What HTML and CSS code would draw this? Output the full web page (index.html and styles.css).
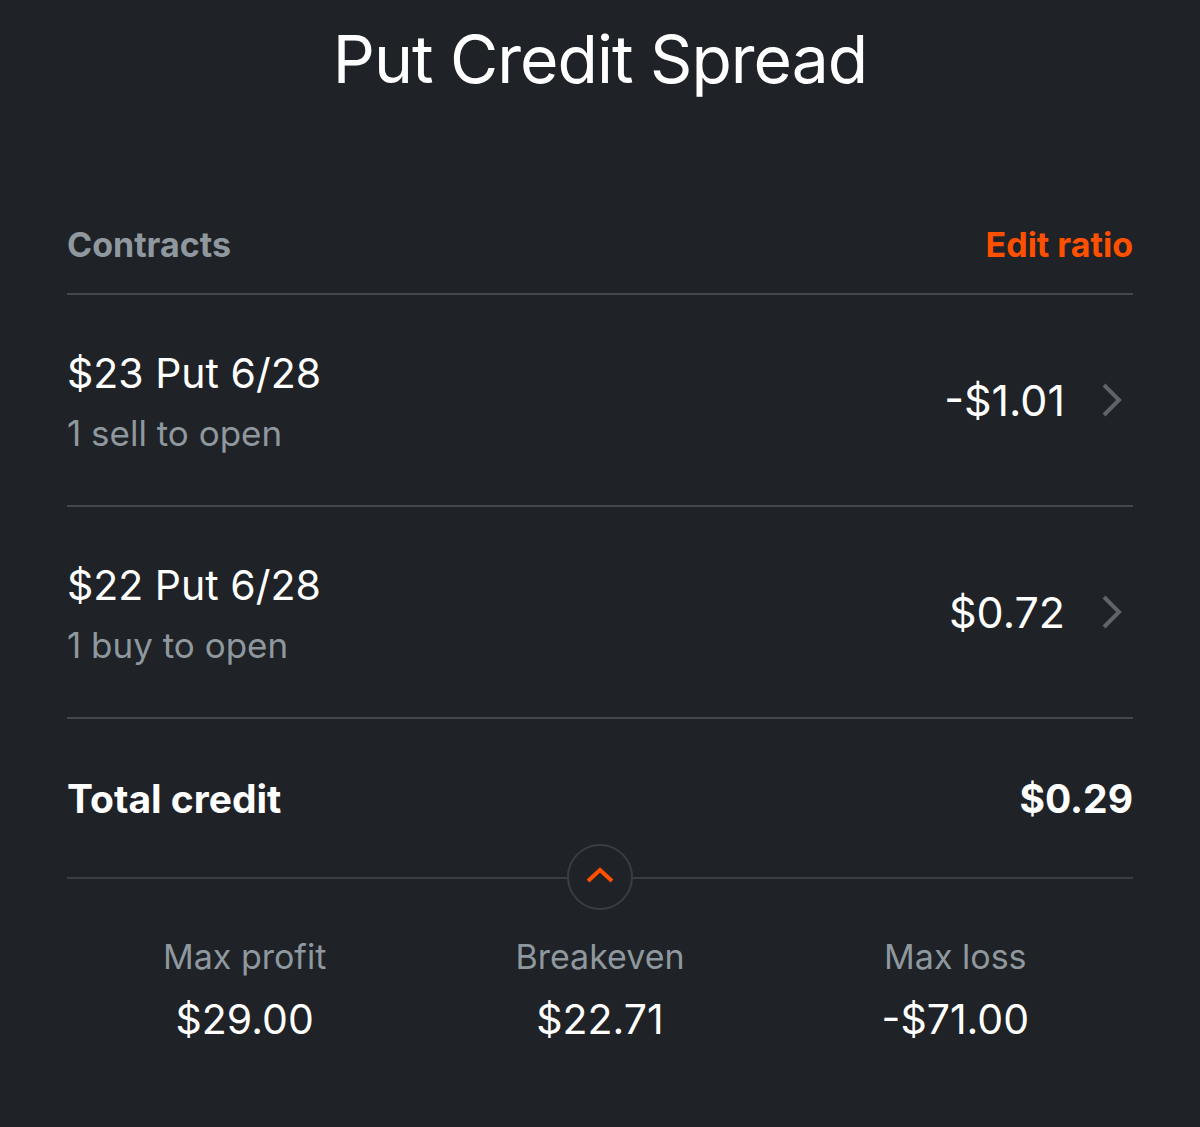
FILE: index.html
```html
<!DOCTYPE html>
<html lang="en">
<head>
  <meta charset="UTF-8">
  <meta name="viewport" content="width=device-width, initial-scale=1.0">
  <title>Put Credit Spread</title>
  <link rel="stylesheet" href="styles.css">
</head>
<body>

  <h1 class="title">Put Credit Spread</h1>

  <div class="sheet">
    <div class="section-head">
      <span class="section-label">Contracts</span>
      <a class="edit-link" href="#">Edit ratio</a>
    </div>

    <div class="leg">
      <div class="leg-info">
        <div class="leg-name">$23 Put 6/28</div>
        <div class="leg-sub">1 sell to open</div>
      </div>
      <div class="leg-price">
        <span>-$1.01</span>
        <svg class="chevron" width="22" height="36" viewBox="0 0 22 36"><path d="M3 3 L18 18 L3 33" fill="none" stroke="#5f6468" stroke-width="4"/></svg>
      </div>
    </div>

    <div class="leg">
      <div class="leg-info">
        <div class="leg-name">$22 Put 6/28</div>
        <div class="leg-sub">1 buy to open</div>
      </div>
      <div class="leg-price">
        <span>$0.72</span>
        <svg class="chevron" width="22" height="36" viewBox="0 0 22 36"><path d="M3 3 L18 18 L3 33" fill="none" stroke="#5f6468" stroke-width="4"/></svg>
      </div>
    </div>

    <div class="total">
      <span>Total credit</span>
      <span>$0.29</span>
    </div>

    <div class="toggle-line">
      <button class="toggle" type="button">
        <svg width="30" height="18" viewBox="0 0 30 18"><path d="M3 15 L15 4 L27 15" fill="none" stroke="#ff5000" stroke-width="4"/></svg>
      </button>
    </div>

    <div class="stats">
      <div class="stat">
        <div class="stat-label">Max profit</div>
        <div class="stat-value">$29.00</div>
      </div>
      <div class="stat">
        <div class="stat-label">Breakeven</div>
        <div class="stat-value">$22.71</div>
      </div>
      <div class="stat">
        <div class="stat-label">Max loss</div>
        <div class="stat-value">-$71.00</div>
      </div>
    </div>
  </div>

</body>
</html>
```

FILE: styles.css
```css
body {
  margin: 0;
  background-color: #1f2226;
  color: #fff;
  font-family: Inter, "Noto Sans", sans-serif;
}
.title {
  margin: 0;
  padding-top: 25px;
  font-size: 66px;
  line-height: 68px;
  font-weight: 400;
  letter-spacing: -1px;
  text-align: center;
}
.sheet {
  padding: 0 67px;
}
.section-head {
  display: flex;
  justify-content: space-between;
  align-items: center;
  height: 98px;
  margin-top: 102px;
  border-bottom: 2px solid #44474b;
}
.section-label {
  font-size: 34px;
  font-weight: 700;
  color: #8e989e;
}
.edit-link {
  font-size: 34px;
  font-weight: 700;
  color: #ff5000;
  text-decoration: none;
}
.leg {
  display: flex;
  justify-content: space-between;
  align-items: center;
  height: 210px;
  border-bottom: 2px solid #44474b;
}
.leg-info {
  padding-top: 6px;
}
.leg-name {
  font-size: 41px;
  line-height: 60px;
}
.leg-sub {
  font-size: 35px;
  line-height: 60px;
  color: #8e989e;
}
.leg-price {
  display: flex;
  align-items: center;
  gap: 36px;
  font-size: 43px;
  padding-right: 10px;
}
.total {
  display: flex;
  justify-content: space-between;
  align-items: center;
  height: 158px;
  font-size: 39px;
  font-weight: 700;
}
.toggle-line {
  position: relative;
  height: 0;
  border-top: 2px solid #3a3d41;
}
.toggle {
  position: absolute;
  left: 50%;
  top: -35px;
  width: 66px;
  height: 66px;
  margin-left: -33px;
  border: 2px solid #3a3d41;
  border-radius: 50%;
  background-color: #1f2226;
  display: flex;
  align-items: center;
  justify-content: center;
  padding: 0 0 4px;
}
.stats {
  display: grid;
  grid-template-columns: 1fr 1fr 1fr;
  padding-top: 56px;
  text-align: center;
}
.stat-label {
  font-size: 34px;
  line-height: 44px;
  color: #8e989e;
}
.stat-value {
  font-size: 41px;
  line-height: 60px;
  margin-top: 10px;
}
```
